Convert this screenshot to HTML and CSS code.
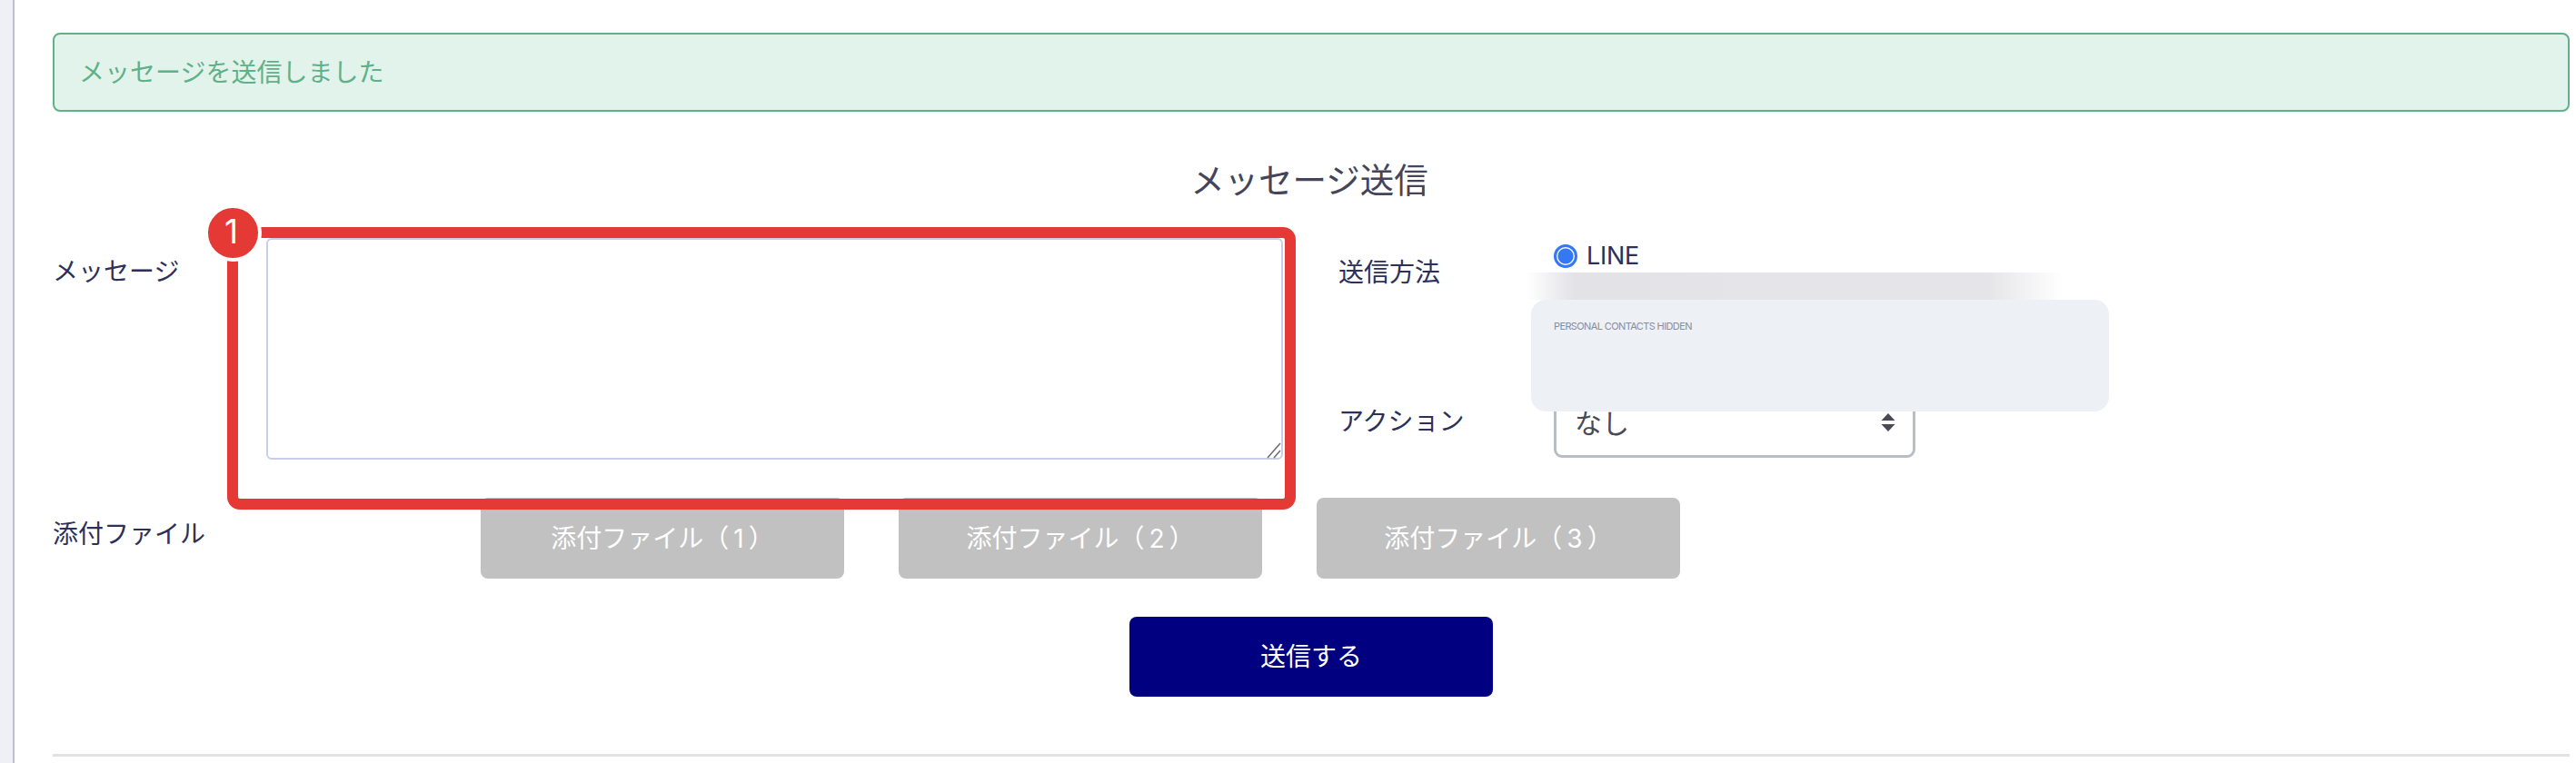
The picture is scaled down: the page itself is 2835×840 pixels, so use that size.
FILE: index.html
```html
<!DOCTYPE html>
<html lang="ja">
<head>
<meta charset="utf-8">
<title>メッセージ送信</title>
<link rel="stylesheet" href="styles.css">
</head>
<body>
<div class="page">
  <aside class="rail"></aside>
  <main class="content">
    <div class="alert">メッセージを送信しました</div>
    <h2 class="title">メッセージ送信</h2>
    <form class="form">
      <div class="message-row">
        <label class="label message-label">メッセージ</label>
        <div class="message-box">
          <textarea class="message-input"></textarea>
          <svg class="grip" width="16" height="18" viewBox="0 0 16 18"><path d="M1 17 15 1M8 17 15 9"/></svg>
        </div>
        <div class="options">
          <div class="option method">
            <span class="label method-label">送信方法</span>
            <div class="method-choices">
              <label class="radio-line"><input class="radio" type="radio" checked><span class="radio-text">LINE</span></label>
            </div>
          </div>
          <div class="option action">
            <span class="label action-label">アクション</span>
            <div class="select-wrap">
              <select class="select"><option>なし</option></select>
              <svg class="select-arrows" width="16" height="20" viewBox="0 0 16 20"><path d="M8 0 15.500 8H.5zM.5 12H15.500L8 20z"/></svg>
            </div>
          </div>
          <div class="smudge"></div>
          <div class="redaction">PERSONAL CONTACTS HIDDEN</div>
        </div>
        <div class="callout"></div>
        <div class="badge">1</div>
      </div>
      <div class="files-row">
        <span class="label files-label">添付ファイル</span>
        <button class="file-btn" type="button">添付ファイル（<span class="num">1</span>）</button>
        <button class="file-btn" type="button">添付ファイル（<span class="num">2</span>）</button>
        <button class="file-btn" type="button">添付ファイル（<span class="num">3</span>）</button>
      </div>
      <div class="submit-row">
        <button class="submit-btn" type="button">送信する</button>
      </div>
    </form>
    <hr class="divider">
  </main>
</div>
</body>
</html>
```
FILE: styles.css
```css
* { box-sizing: border-box; }
html, body { margin: 0; padding: 0; background: #fff; }
body {
  font-family: Inter, "Noto Sans CJK JP", sans-serif;
  font-size: 28px;
  line-height: 40px;
  color: #2d3059;
  overflow: hidden;
}
.page { display: flex; min-height: 100vh; }
.rail { flex: 0 0 16px; background: #eef0f6; border-right: 2px solid #bcbfcc; }
.content { flex: 1; min-width: 0; padding: 36px 7px 0 42px; }

.alert {
  height: 87px;
  padding: 0 27px;
  display: flex;
  align-items: center;
  background: #e2f3eb;
  border: 2px solid #60b088;
  border-radius: 8px;
  color: #60b088;
}
.title {
  margin: 51px 0 0;
  padding-right: 4px;
  text-align: center;
  font-size: 37.500px;
  line-height: 50px;
  font-weight: 400;
  color: #44445a;
}

.message-row { position: relative; display: flex; margin-top: 38px; }
.message-label { flex: 0 0 235px; padding-top: 17px; }
.message-box { position: relative; flex: 0 0 1119px; height: 244px; }
.message-input {
  display: block;
  width: 100%;
  height: 100%;
  background: #fff;
  border: 2px solid #c9cde6;
  border-radius: 6px;
  outline: none;
  resize: none;
}
.grip {
  position: absolute;
  right: 2px;
  bottom: 1px;
  fill: none;
  stroke: #6a6a70;
  stroke-width: 1.500;
}
.options { position: relative; margin-left: 61px; flex: 1; }
.option { display: flex; }
.method { height: 166px; }
.method-label, .action-label { flex: 0 0 237px; }
.method-label { padding-top: 18px; }
.action-label { padding-top: 16px; }
.radio-line { display: flex; align-items: center; gap: 10px; height: 40px; }
.radio-text { font-size: 27px; letter-spacing: -0.3px; }
.radio {
  appearance: none;
  margin: 0;
  width: 26px;
  height: 26px;
  border: 3px solid #3478f6;
  border-radius: 50%;
  background: radial-gradient(circle, #3478f6 0 8px, #fff 9px);
}
.select-wrap { position: relative; width: 398px; height: 76px; }
.select {
  appearance: none;
  display: block;
  width: 100%;
  height: 100%;
  padding: 0 20px;
  font: inherit;
  font-size: 30px;
  color: #4a4a55;
  background: #fff;
  border: 3px solid #b9bdc6;
  border-radius: 9px;
}
.select-arrows { position: absolute; top: 27px; right: 22px; fill: #4a4a55; }

.smudge {
  position: absolute;
  left: 207px;
  top: 38px;
  width: 590px;
  height: 30px;
  background: linear-gradient(90deg, #fff 0, #e2e2e7 9%, #e5e5e9 50%, #e5e5e9 86%, #fff 100%);
}
.redaction {
  position: absolute;
  left: 212px;
  top: 68px;
  width: 636px;
  height: 123px;
  padding: 19px 25px;
  font-size: 11px;
  line-height: 20px;
  letter-spacing: -0.62px;
  color: #8a8d9c;
  background: #edf0f5;
  border-radius: 16px;
}

.callout {
  position: absolute;
  left: 192px;
  top: -12px;
  width: 1176px;
  height: 311px;
  border: 12px solid #e53935;
  border-radius: 14px;
  z-index: 2;
  pointer-events: none;
}
.badge {
  position: absolute;
  left: 167px;
  top: -37px;
  width: 63px;
  height: 63px;
  display: flex;
  align-items: center;
  justify-content: center;
  padding: 0 4px 5px 0;
  font-size: 37px;
  line-height: 1;
  color: #fff;
  background: #e53935;
  border: 4px solid #fff;
  border-radius: 50%;
  z-index: 3;
}

.files-row { display: flex; gap: 60px; margin-top: 42px; }
.files-label { flex: 0 0 411px; padding-top: 20px; }
.file-btn, .submit-btn {
  height: 89px;
  width: 400px;
  padding: 0;
  border: 0;
  border-radius: 8px;
  color: #fff;
  font: inherit;
}
.file-btn { background: #c1c1c1; }
.num { margin: 0 5px; }
.submit-row { display: flex; justify-content: center; margin-top: 42px; }
.submit-btn { height: 88px; background: #000080; }
.divider { height: 3px; margin: 63px 0 0; border: 0; background: #e2e2e4; }
```
